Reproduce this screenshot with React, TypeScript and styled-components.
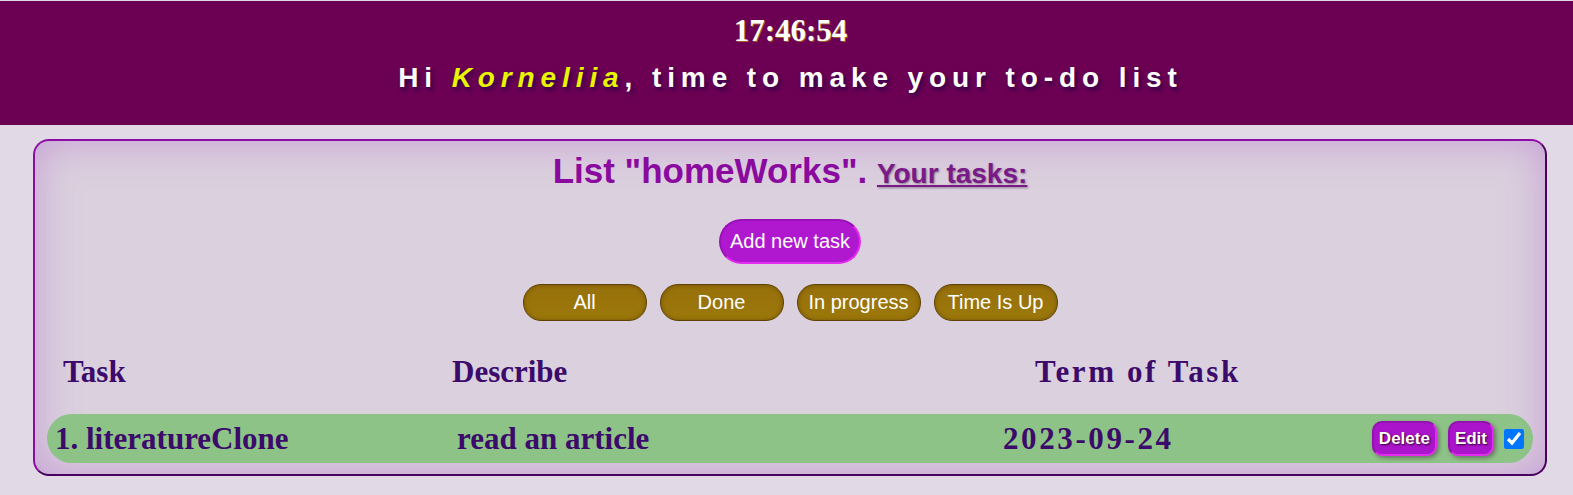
import React, { useState } from "react";
import styled, { createGlobalStyle } from "styled-components";

const GlobalStyle = createGlobalStyle`
  html, body {
    margin: 0;
    padding: 0;
    background: #e2d9e6;
  }
  body {
    padding-top: 1px;
    font-family: "Liberation Sans", Arial, sans-serif;
  }
`;

interface Task {
  id: number;
  title: string;
  describe: string;
  term: string;
  done: boolean;
}

const filters = ["All", "Done", "In progress", "Time Is Up"];

export default function App() {
  const [tasks, setTasks] = useState<Task[]>([
    {
      id: 1,
      title: "literatureClone",
      describe: "read an article",
      term: "2023-09-24",
      done: true,
    },
  ]);

  const toggle = (id: number) => {
    setTasks((prev) =>
      prev.map((t) => (t.id === id ? { ...t, done: !t.done } : t))
    );
  };

  return (
    <>
      <GlobalStyle />
      <Header>
        <Clock>17:46:54</Clock>
        <Greeting>
          Hi <UserName>Korneliia</UserName>, time to make your to-do list
        </Greeting>
      </Header>
      <Card>
        <Title>
          List "homeWorks". <SubTitle>Your tasks:</SubTitle>
        </Title>
        <AddRow>
          <AddButton>Add new task</AddButton>
        </AddRow>
        <FilterRow>
          {filters.map((f) => (
            <FilterButton key={f}>{f}</FilterButton>
          ))}
        </FilterRow>
        <TableHead>
          <HeadCell>Task</HeadCell>
          <HeadCell>Describe</HeadCell>
          <HeadCell $spaced>Term of Task</HeadCell>
        </TableHead>
        {tasks.map((task, i) => (
          <TaskRow key={task.id}>
            <Cell>
              {i + 1}. {task.title}
            </Cell>
            <Cell>{task.describe}</Cell>
            <Cell $spaced>{task.term}</Cell>
            <Actions>
              <SmallButton>Delete</SmallButton>
              <SmallButton>Edit</SmallButton>
              <Check
                type="checkbox"
                checked={task.done}
                onChange={() => toggle(task.id)}
              />
            </Actions>
          </TaskRow>
        ))}
      </Card>
    </>
  );
}

const Header = styled.header`
  background: #6c0053;
  height: 124px;
  box-sizing: border-box;
  padding: 12px 0 0 8px;
  display: flex;
  flex-direction: column;
  align-items: center;
  color: #fff;
`;

const Clock = styled.div`
  font-family: "Liberation Serif", "Times New Roman", serif;
  font-weight: bold;
  font-size: 31px;
  line-height: 36px;
  text-shadow: 1px 1px 0 rgba(200, 150, 0, 0.6);
`;

const Greeting = styled.div`
  margin-top: 13px;
  font-family: "Liberation Sans", Arial, sans-serif;
  font-weight: bold;
  font-size: 28px;
  line-height: 32px;
  letter-spacing: 5.9px;
  text-shadow: 2px 3px 4px #2b0048;
`;

const UserName = styled.i`
  color: #e8f500;
`;

const Card = styled.main`
  margin: 14px 26px 0 33px;
  box-sizing: border-box;
  border: 2px solid;
  border-color: #8c0ba6 #4a005f #4a005f #8c0ba6;
  border-radius: 16px;
  background: #dbd0de;
  box-shadow: inset 0 0 40px rgba(190, 140, 210, 0.75);
  padding: 10px 12px 11px;
`;

const Title = styled.h1`
  margin: 0;
  text-align: center;
  font-family: "Liberation Sans", Arial, sans-serif;
  font-weight: bold;
  font-size: 35px;
  line-height: 40px;
  color: #8a0aa0;
`;

const SubTitle = styled.span`
  font-size: 28px;
  color: #7a1a88;
  text-decoration: underline;
  text-shadow: 1px 1px 2px #8d7a90;
`;

const AddRow = styled.div`
  display: flex;
  justify-content: center;
  margin-top: 25px;
`;

const AddButton = styled.button`
  height: 45px;
  padding: 0 9px;
  border-radius: 23px;
  border: 2px solid;
  border-color: #9a10b8 #e22cf0 #e22cf0 #9a10b8;
  background: #b018d0;
  color: #fff;
  font-family: "Liberation Sans", Arial, sans-serif;
  font-size: 20px;
  cursor: pointer;
`;

const FilterRow = styled.div`
  display: flex;
  justify-content: center;
  gap: 13px;
  margin-top: 20px;
`;

const FilterButton = styled.button`
  width: 124px;
  height: 37px;
  padding: 0;
  border-radius: 18px;
  border: 1px solid #5e4200;
  background: linear-gradient(#97700a, #9c780a);
  box-shadow: inset 0 0 4px rgba(80, 50, 0, 0.5);
  color: #fff;
  font-family: "Liberation Sans", Arial, sans-serif;
  font-size: 20px;
  cursor: pointer;
`;

const TableHead = styled.div`
  display: grid;
  grid-template-columns: 389px 583px 1fr;
  padding-left: 16px;
  margin-top: 33px;
`;

const HeadCell = styled.div<{ $spaced?: boolean }>`
  font-family: "Liberation Serif", "Times New Roman", serif;
  font-weight: bold;
  font-size: 31px;
  line-height: 36px;
  color: #3b0a6a;
  letter-spacing: ${({ $spaced }) => ($spaced ? "2.6px" : "0")};
`;

const TaskRow = styled.div`
  display: grid;
  grid-template-columns: 402px 546px 1fr auto;
  align-items: center;
  height: 49px;
  margin-top: 24px;
  padding: 0 9px 0 8px;
  border-radius: 25px;
  background: #8dc386;
`;

const Cell = styled.div<{ $spaced?: boolean }>`
  font-family: "Liberation Serif", "Times New Roman", serif;
  font-weight: bold;
  font-size: 31px;
  color: #3b0a6a;
  letter-spacing: ${({ $spaced }) => ($spaced ? "2.6px" : "0")};
  white-space: nowrap;
`;

const Actions = styled.div`
  display: flex;
  align-items: center;
  gap: 11px;
`;

const SmallButton = styled.button`
  height: 35px;
  padding: 0 5px;
  border-radius: 10px;
  border: 2px solid;
  border-color: #9410b0 #e22cf0 #e22cf0 #9410b0;
  background: #aa14ca;
  box-shadow: 2px 2px 4px rgba(60, 20, 60, 0.45);
  color: #fff;
  font-family: "Liberation Sans", Arial, sans-serif;
  font-weight: bold;
  font-size: 17px;
  text-shadow: 1px 1px 2px #2a0030;
  cursor: pointer;
`;

const Check = styled.input`
  width: 20px;
  height: 20px;
  margin: 0 0 0 -1px;
  accent-color: #0075ff;
`;
